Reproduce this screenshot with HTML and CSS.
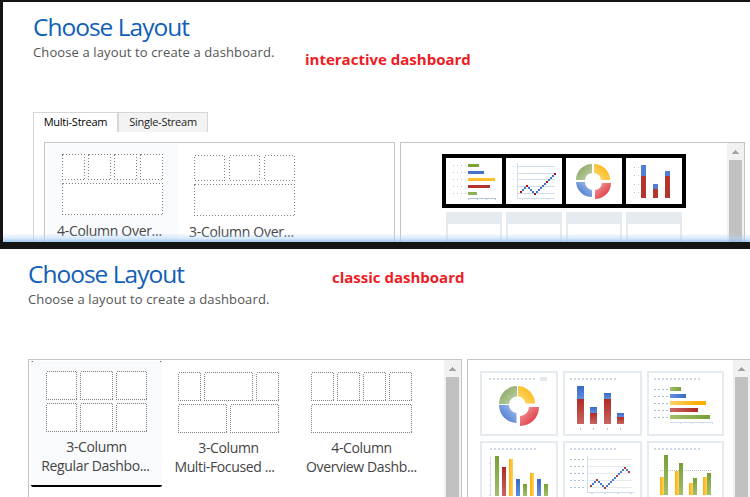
FILE: index.html
```html
<!DOCTYPE html>
<html lang="en">
<head>
<meta charset="utf-8">
<title>Choose Layout</title>
<link rel="stylesheet" href="styles.css">
</head>
<body>
<svg class="defs" width="0" height="0">
  <defs>
    <linearGradient id="gg" x1="0" y1="0" x2="1" y2="1"><stop offset="0" stop-color="#7e9f55"/><stop offset="1" stop-color="#c7d5ad"/></linearGradient>
    <linearGradient id="gy" x1="1" y1="0" x2="0" y2="1"><stop offset="0" stop-color="#f8ac00"/><stop offset="1" stop-color="#ffdf7b"/></linearGradient>
    <linearGradient id="gb" x1="0" y1="1" x2="1" y2="0"><stop offset="0" stop-color="#3067c6"/><stop offset="1" stop-color="#b1c8f0"/></linearGradient>
    <linearGradient id="gr" x1="1" y1="1" x2="0" y2="0"><stop offset="0" stop-color="#d82028"/><stop offset="1" stop-color="#f5a5a9"/></linearGradient>
    <linearGradient id="vr" x1="0" y1="0" x2="0" y2="1"><stop offset="0" stop-color="#af2b23"/><stop offset="1" stop-color="#c96562"/></linearGradient>
    <linearGradient id="vb" x1="0" y1="0" x2="0" y2="1"><stop offset="0" stop-color="#386ac5"/><stop offset="1" stop-color="#618ddd"/></linearGradient>
    <linearGradient id="vg" x1="0" y1="0" x2="0" y2="1"><stop offset="0" stop-color="#77a033"/><stop offset="1" stop-color="#a1bf6c"/></linearGradient>
    <linearGradient id="hy"><stop offset="0" stop-color="#ffad00"/><stop offset="1" stop-color="#ffd267"/></linearGradient>
    <linearGradient id="hyr"><stop offset="0" stop-color="#ffd267"/><stop offset=".8" stop-color="#ffad00"/></linearGradient>
    <linearGradient id="hg"><stop offset="0" stop-color="#a1bf6c"/><stop offset="1" stop-color="#77a033"/></linearGradient>
    <linearGradient id="hb"><stop offset="0" stop-color="#6790de"/><stop offset="1" stop-color="#386ac5"/></linearGradient>
    <linearGradient id="hr"><stop offset="0" stop-color="#c96562"/><stop offset="1" stop-color="#af2b23"/></linearGradient>
    <path id="titledots" d="M7 8H53" stroke="#cdd9e8" stroke-width="2" stroke-dasharray="2 2"/>
  </defs>
</svg>

<section class="window interactive">
  <h1>Choose Layout</h1>
  <p class="sub">Choose a layout to create a dashboard.</p>
  <strong class="note note-a">interactive dashboard</strong>
  <div class="tabs"><span class="tab on">Multi-Stream</span><span class="tab off">Single-Stream</span></div>
  <div class="pane">
    <div class="box list">
      <div class="tile selected">
        <svg class="thumb loose" width="102" height="62"><path d="M.5 .5h22v25h-22zM26.500 .5h22v25h-22zM52.500 .5h22v25h-22zM78.500 .5h22v25h-22zM.5 29.500h100v31h-100z"/></svg>
        <span class="label">4-Column Over...</span>
      </div>
      <div class="tile lower">
        <svg class="thumb loose" width="102" height="62"><path d="M.5 .5h30v25h-30zM35.500 .5h30v25h-30zM70.500 .5h30v25h-30zM.5 29.500h100v31h-100z"/></svg>
        <span class="label">3-Column Over...</span>
      </div>
    </div>
    <div class="box preview">
      <div class="dash">
        <div class="charts">
          <svg width="56" height="46">
            <path d="M7 7.500h13M7 14.500h13M7 21.500h13M7 28.500h13M7 35.500h13" stroke="#b4c4da" stroke-dasharray="1 3"/>
            <path fill="#7ba22f" d="M22 6h11v3H22z"/><path fill="#4472ca" d="M22 13h16v3H22z"/><path fill="#fdc02b" d="M22 20h27v3H22z"/><path fill="#b3352c" d="M22 27h22v3H22z"/><path fill="#8fb255" d="M22 34h9v3h-9z"/>
            <path fill="#b0c4de" d="M22 40h28v1H22zM22 41h1v1h-1zM31 41h1v1h-1zM40 41h1v1h-1zM49 41h1v1h-1z"/>
          </svg>
          <svg width="56" height="46">
            <path fill="#cfdded" d="M11 5h1v36h-1zM11 8h38v1H11zM11 15h38v1H11zM11 21h38v1H11zM11 28h38v1H11zM11 35h38v1H11zM11 40h38v1H11zM7 8h1v1h-1zM7 15h1v1h-1zM7 21h1v1h-1zM7 28h1v1h-1zM7 35h1v1h-1zM16 41h1v1h-1zM28 41h1v1h-1zM41 41h1v1h-1z"/>
            <path fill="#3c70c9" d="M16 31h2v2h-2zM18 29h2v2h-2zM22 29h2v2h-2zM24 31h2v2h-2zM26 33h2v2h-2zM30 33h2v2h-2zM32 31h2v2h-2zM34 29h2v2h-2zM36 27h2v2h-2zM38 25h2v2h-2zM42 21h2v2h-2zM44 19h2v2h-2zM46 17h2v2h-2z"/>
            <path fill="#ae0a0a" d="M14 33h2v2h-2zM20 27h2v2h-2zM28 35h2v2h-2zM40 23h2v2h-2zM48 15h2v2h-2z"/>
          </svg>
          <svg class="ring" width="56" height="46">
            <path fill="url(#gg)" d="M10 22A16 16 0 0 1 26 6V15A8 8 0 0 0 19 22Z"/>
            <path fill="url(#gy)" d="M28 6A16 16 0 0 1 44 22H35A8 8 0 0 0 28 15Z"/>
            <path fill="url(#gb)" d="M10 24A16 16 0 0 0 26 39V32A8 8 0 0 1 19 24Z"/>
            <path fill="url(#gr)" d="M29 41A16 16 0 0 0 45 25H36A8 8 0 0 1 29 32Z"/>
          </svg>
          <svg width="56" height="46">
            <path fill="#b7cbe2" d="M8 9h1v1H8zM12 9h1v1h-1zM8 17h1v1H8zM12 17h1v1h-1zM8 26h1v1H8zM12 26h1v1h-1zM8 34h1v1H8zM12 34h1v1h-1z"/>
            <path fill="#517ed0" d="M15 7h5v11h-5zM27 26h5v5h-5zM39 13h5v5h-5z"/>
            <path fill="#b3352e" d="M15 18h5v22h-5zM27 31h5v9h-5zM39 18h5v22h-5z"/>
          </svg>
        </div>
        <div class="streams"><i></i><i></i><i></i><i></i></div>
      </div>
      <div class="scroll"><svg width="7" height="4"><path fill="#a3a3a3" d="M3 0h1v1h1v1h1v1h1v1H0V3h1V2h1V1h1z"/></svg><div class="thumbbar"></div></div>
    </div>
  </div>
  <div class="glow"></div>
</section>

<section class="window classic">
  <h1>Choose Layout</h1>
  <p class="sub">Choose a layout to create a dashboard.</p>
  <strong class="note note-b">classic dashboard</strong>
  <div class="pane">
    <div class="box list">
      <div class="tile selected">
        <svg class="thumb" width="102" height="62"><path d="M.5 .5h30v28h-30zM34.500 .5h32v28h-32zM70.500 .5h30v28h-30zM.5 32.500h30v28h-30zM34.500 32.500h32v28h-32zM70.500 32.500h30v28h-30z"/></svg>
        <span class="label">3-Column<br><span class="trail">Regular Dashbo...</span></span>
      </div>
      <div class="tile lower">
        <svg class="thumb" width="102" height="62"><path d="M.5 .5h22v28h-22zM26.500 .5h48v28h-48zM78.500 .5h22v28h-22zM.5 32.500h48v28h-48zM52.500 32.500h48v28h-48z"/></svg>
        <span class="label">3-Column<br><span class="trail wide">Multi-Focused ...</span></span>
      </div>
      <div class="tile lower third">
        <svg class="thumb" width="102" height="62"><path d="M.5 .5h22v28h-22zM26.500 .5h22v28h-22zM52.500 .5h22v28h-22zM78.500 .5h22v28h-22zM.5 32.500h100v28h-100z"/></svg>
        <span class="label">4-Column<br>Overview Dashb...</span>
      </div>
      <div class="scroll"><svg width="7" height="4"><path fill="#a3a3a3" d="M3 0h1v1h1v1h1v1h1v1H0V3h1V2h1V1h1z"/></svg><div class="thumbbar"></div></div>
    </div>
    <div class="box preview">
      <div class="cards">
        <svg class="card ring" height="65">
          <path d="M9 8H55" stroke="#cdd9e8" stroke-width="2" stroke-dasharray="2 2"/><path fill="#e4e9ee" d="M60 6h7v4h-7z"/>
          <path fill="url(#gg)" d="M19 33A18 18 0 0 1 37 15V25.500A8 8 0 0 0 29 33Z"/>
          <path fill="url(#gy)" d="M38 15A18 18 0 0 1 55 32.500H45.500A8 8 0 0 0 38 25.500Z"/>
          <path fill="url(#gb)" d="M19 34A18 18 0 0 0 36.500 52V42A8 8 0 0 1 29 34Z"/>
          <path fill="url(#gr)" d="M40 55A19 19 0 0 0 59 36H49A9 9 0 0 1 40 45Z"/>
        </svg>
        <svg class="card" height="65">
          <use href="#titledots"/>
          <path fill="#b5cae2" d="M17 57h1v2h-1zM30 57h1v2h-1zM44 57h1v2h-1zM57 57h1v2h-1z"/>
          <g fill="url(#vb)"><rect x="14" y="15" width="7" height="13"/><rect x="27" y="36" width="7" height="6"/><rect x="41" y="22" width="7" height="6"/><rect x="54" y="42" width="7" height="4"/></g>
          <g fill="url(#vr)"><rect x="14" y="28" width="7" height="25"/><rect x="27" y="42" width="7" height="11"/><rect x="41" y="28" width="7" height="25"/><rect x="54" y="46" width="7" height="7"/></g>
        </svg>
        <svg class="card" height="65">
          <use href="#titledots"/>
          <path d="M7 18.500h14M7 25.500h14M7 32.500h14M7 39.500h14M7 46.500h14" stroke="#a9c0dd" stroke-dasharray="2 2"/>
          <rect x="23" y="16" width="11" height="4" fill="url(#hg)"/><rect x="23" y="23" width="16" height="4" fill="url(#hb)"/><rect x="23" y="30" width="36" height="4" fill="url(#hyr)"/><rect x="23" y="37" width="28" height="4" fill="url(#hr)"/><rect x="23" y="44" width="40" height="4" fill="url(#hg)"/>
          <path fill="#cfdded" d="M23 51h43v1H23zM33 52h1v1h-1zM44 52h1v1h-1zM55 52h1v1h-1zM65 52h1v1h-1z"/>
        </svg>
        <svg class="card" height="65">
          <path d="M10 8H56" stroke="#cdd9e8" stroke-width="2" stroke-dasharray="2 2"/>
          <path fill="#cfdded" d="M10 15h1v40h-1zM9 22h1v1H9zM9 33h1v1H9zM9 44h1v1H9zM9 54h1v1H9z"/>
          <g fill="url(#vg)"><rect x="15" y="15" width="4" height="40"/><rect x="43" y="43" width="4" height="12"/><rect x="64" y="43" width="4" height="12"/></g>
          <rect x="22" y="26" width="4" height="29" fill="url(#vr)"/>
          <g fill="url(#hy)"><rect x="29" y="18" width="4" height="37"/><rect x="50" y="32" width="4" height="23"/></g>
          <g fill="url(#vb)"><rect x="36" y="38" width="4" height="17"/><rect x="57" y="38" width="4" height="17"/></g>
        </svg>
        <svg class="card" height="65">
          <use href="#titledots"/>
          <path fill="#e6ebef" d="M24 18h45v1H24zM24 25h45v1H24zM24 32h45v1H24zM24 39h45v1H24zM24 46h45v1H24z"/>
          <path fill="#cfdded" d="M24 15h1v37h-1zM24 51h47v1H24zM28 52h2v1h-2zM41 52h2v1h-2zM54 52h2v1h-2zM67 52h2v1h-2z"/>
          <path d="M7 18.500h14M7 25.500h14M7 32.500h14M7 39.500h14M7 46.500h14" stroke="#a9c0dd" stroke-dasharray="2 2"/>
          <path fill="#4879cf" d="M29 42h2v2h-2zM31 40h2v2h-2zM35 40h2v2h-2zM37 42h2v2h-2zM39 44h2v2h-2zM43 44h2v2h-2zM45 42h2v2h-2zM47 40h2v2h-2zM49 38h2v2h-2zM51 36h2v2h-2zM55 32h2v2h-2zM57 30h2v2h-2zM59 28h2v2h-2zM63 28h2v2h-2z"/>
          <path fill="#b6342b" d="M27 44h2v2h-2zM33 38h2v2h-2zM41 46h2v2h-2zM53 34h2v2h-2zM61 26h2v2h-2zM65 30h2v2h-2z"/>
        </svg>
        <svg class="card" height="65">
          <use href="#titledots"/>
          <path d="M13 29.500h51" stroke="#c4c4c4" stroke-dasharray="1 1"/>
          <g fill="url(#hy)"><rect x="13" y="36" width="4" height="18"/><rect x="28" y="30" width="4" height="24"/><rect x="42" y="42" width="4" height="12"/><rect x="56" y="36" width="4" height="18"/></g>
          <g fill="url(#vg)"><rect x="17" y="14" width="4" height="40"/><rect x="32" y="22" width="4" height="32"/><rect x="46" y="37" width="4" height="17"/><rect x="60" y="32" width="4" height="22"/></g>
        </svg>
      </div>
      <div class="scroll"><svg width="7" height="4"><path fill="#a3a3a3" d="M3 0h1v1h1v1h1v1h1v1H0V3h1V2h1V1h1z"/></svg><div class="thumbbar"></div></div>
    </div>
  </div>
</section>
</body>
</html>
```

FILE: styles.css
```css
* { box-sizing: border-box; }
html, body { margin: 0; height: 497px; overflow: hidden; }
body { background: #fff; font-family: "Open Sans", "Noto Sans", sans-serif; color: #444; }
svg { display: block; flex: none; shape-rendering: crispEdges; }
.ring { shape-rendering: auto; }
.defs { height: 0; }
.window { position: relative; overflow: hidden; background: #fff; }
.interactive { height: 249px; padding-left: 30px; border: solid #141414; border-width: 2px 0 7px 3px; }
.classic { height: 248px; padding-left: 28px; }
h1 { margin: 0 0 -1px; padding-top: 8px; font-size: 24.5px; line-height: 34px; font-weight: 400; color: #1160b7; letter-spacing: -1px; white-space: nowrap; }
.sub { margin: 0; font-size: 13px; line-height: 18px; color: #555; letter-spacing: .12px; white-space: nowrap; }
.note { position: absolute; font-size: 15px; line-height: 20px; font-weight: 700; color: #ed1c24; white-space: nowrap; letter-spacing: 0; }
.note-a { left: 302px; top: 47px; }
.note-b { left: 332px; top: 18px; }

.tabs { display: flex; margin-top: 51px; height: 20px; }
.tab { height: 20px; border: 1px solid #d6d6d6; border-bottom: 0; font-size: 11px; line-height: 17px; letter-spacing: -.25px; text-align: center; color: #000; }
.on { width: 85px; }
.off { width: 90px; background: #f3f3f3; color: #222; }
.interactive .pane { display: flex; gap: 5px; height: 110px; padding: 10px 0 0 10px; border-left: 1px solid #d6d6d6; }
.box { display: flex; flex: none; border: 1px solid #c5c5c5; overflow: hidden; }
.interactive .box { height: 120px; border-bottom: 0; }
.interactive .list { width: 351px; padding: 1px 0 0 2px; }
.interactive .preview { width: 345px; }
.tile { width: 131px; flex: none; height: 126px; padding: 10px 0 0 15px; }
.tile + .tile { margin-left: 1px; }
.tile.selected { background: #f8fafc; }
.tile.lower { padding-top: 11px; }
.thumb path { fill: #fff; stroke: #808080; stroke-dasharray: 1 1; }
.thumb.loose path { stroke-dasharray: 1 2; }
.label { display: block; font-size: 14px; line-height: 19px; letter-spacing: -.37px; white-space: nowrap; color: #444; }
.interactive .label { margin: 5px 0 0 -5px; letter-spacing: -.3px; }

.dash { flex: 1; padding: 11px 0 0 41px; }
.charts { display: flex; gap: 4px; width: 244px; padding: 4px; background: #000; }
.charts svg { background: #fff; }
.streams { display: flex; gap: 4px; padding: 4px; }
.streams i { width: 56px; height: 60px; border: solid #e6ebef; border-width: 12px 2px 2px; }
.scroll { width: 17px; height: 200px; padding: 7px 2px 0; background: #f1f1f1; flex: none; }
.scroll svg { margin: 0 0 6px 3px; }
.thumbbar { height: 180px; background: #c1c1c1; }
.glow { position: absolute; left: 0; right: 0; bottom: 0; height: 9px; background: linear-gradient(rgba(200,225,250,0), rgba(180,212,247,.5) 60%, rgba(145,190,240,.85)); }

.classic .pane { display: flex; gap: 5px; margin-top: 51px; height: 138px; }
.classic .box { height: 150px; border-bottom: 0; }
.classic .list { width: 434px; padding: 1px 0 0 2px; }
.classic .list .scroll { margin: -1px 0 0 auto; }
.classic .preview { width: 284px; }
.classic .tile.selected {
  border: solid #000; border-width: 0 0 2px; border-radius: 2px;
  background: linear-gradient(#555, #555) 0 0 / 2px 1px no-repeat, linear-gradient(#555, #555) 100% 0 / 2px 1px no-repeat, #f8fafc;
}
.classic .tile.third { margin-left: 2px; }
.classic .label { margin: 4px 0 0 -15px; text-align: center; }
.trail { padding-right: 2px; }
.trail.wide { padding-right: 8px; }
.cards { display: grid; grid-template-columns: 78px 79px 77px; grid-auto-rows: 65px; gap: 5px; padding: 11px 0 0 12px; width: 265px; flex: none; }
.card { width: 100%; box-shadow: inset 0 0 0 2px #e6ebef; }
```
